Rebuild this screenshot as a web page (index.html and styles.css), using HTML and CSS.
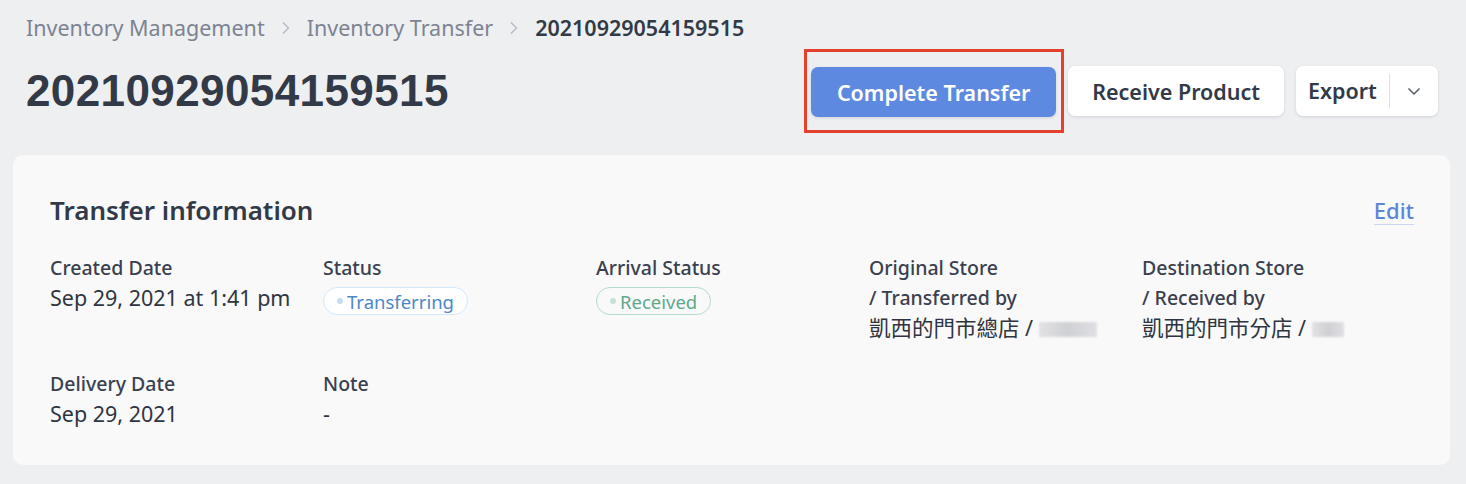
FILE: index.html
```html
<!DOCTYPE html>
<html lang="en">
<head>
    <meta charset="UTF-8">
    <meta name="viewport" content="width=device-width, initial-scale=1.0">
    <title>20210929054159515</title>
    <link rel="stylesheet" href="styles.css">
</head>
<body>
    <nav class="breadcrumb">
        <a href="#">Inventory Management</a>
        <span class="sep"><svg width="10" height="14" viewBox="0 0 10 14"><path d="M2 1.5 L7.5 7 L2 12.5" fill="none" stroke="#b3b8c2" stroke-width="1.3"/></svg></span>
        <a href="#">Inventory Transfer</a>
        <span class="sep"><svg width="10" height="14" viewBox="0 0 10 14"><path d="M2 1.5 L7.5 7 L2 12.5" fill="none" stroke="#b3b8c2" stroke-width="1.3"/></svg></span>
        <span class="current">20210929054159515</span>
    </nav>

    <header class="page-header">
        <h1>20210929054159515</h1>
        <div class="actions">
            <div class="highlight">
                <button class="btn btn-primary">Complete Transfer</button>
            </div>
            <button class="btn">Receive Product</button>
            <div class="btn btn-split">
                <span class="split-label">Export</span>
                <span class="split-toggle"><svg width="14" height="9" viewBox="0 0 14 9"><path d="M1.5 1.5 L7 7 L12.5 1.5" fill="none" stroke="#555c68" stroke-width="1.5"/></svg></span>
            </div>
        </div>
    </header>

    <section class="card">
        <div class="card-head">
            <h2>Transfer information</h2>
            <a href="#" class="edit">Edit</a>
        </div>

        <div class="info-grid">
            <div class="field">
                <div class="label">Created Date</div>
                <div class="value">Sep 29, 2021 at 1:41 pm</div>
            </div>
            <div class="field">
                <div class="label">Status</div>
                <span class="badge badge-blue"><i class="dot"></i>Transferring</span>
            </div>
            <div class="field">
                <div class="label">Arrival Status</div>
                <span class="badge badge-green"><i class="dot"></i>Received</span>
            </div>
            <div class="field">
                <div class="label">Original Store</div>
                <div class="label">/ Transferred by</div>
                <div class="value">凱西的門市總店 / <span class="masked wide"></span></div>
            </div>
            <div class="field">
                <div class="label">Destination Store</div>
                <div class="label">/ Received by</div>
                <div class="value">凱西的門市分店 / <span class="masked"></span></div>
            </div>

            <div class="field">
                <div class="label">Delivery Date</div>
                <div class="value">Sep 29, 2021</div>
            </div>
            <div class="field">
                <div class="label">Note</div>
                <div class="value">-</div>
            </div>
        </div>
    </section>
</body>
</html>
```

FILE: styles.css
```css
body {
    margin: 0;
    padding: 0 16px 20px 13px;
    background: #eeeff1;
    color: #333a47;
    font-family: "Noto Sans", "Noto Sans CJK TC", sans-serif;
}

.breadcrumb {
    display: flex;
    align-items: center;
    gap: 16px;
    padding: 13px 0 0 13px;
    font-size: 21.5px;
    line-height: 30px;
}

.breadcrumb a {
    color: #7c8392;
    text-decoration: none;
}

.breadcrumb .sep {
    display: flex;
    align-items: center;
}

.breadcrumb .current {
    color: #333a47;
    font-weight: 600;
}

.page-header {
    display: flex;
    align-items: center;
    justify-content: space-between;
    padding: 0 12px 0 13px;
    height: 100px;
    margin-top: -2px;
}

.page-header h1 {
    margin: 0;
    font-family: "Liberation Sans", Arial, sans-serif;
    font-size: 44px;
    font-weight: 700;
    color: #333a47;
    letter-spacing: 0.4px;
}

.actions {
    display: flex;
    align-items: center;
    gap: 12px;
}

.highlight {
    border: 3px solid #e5402b;
    padding: 15px 5px 13px 4px;
    margin-right: -8px;
}

.btn {
    height: 50px;
    padding: 0 24px;
    border: none;
    border-radius: 7px;
    background: #ffffff;
    color: #333a47;
    font-family: "Noto Sans", sans-serif;
    font-size: 21.5px;
    font-weight: 600;
    box-shadow: 0 1px 3px rgba(40, 50, 70, 0.15);
    cursor: pointer;
}

.btn-primary {
    display: block;
    width: 245px;
    padding: 0;
    background: #5d89e0;
    color: #ffffff;
}

.btn-split {
    display: flex;
    align-items: center;
    padding: 0;
    height: 50px;
    width: 142px;
    box-sizing: border-box;
}

.split-label {
    padding: 0 12px 0 12px;
    border-right: 1px solid #dfe1e5;
    line-height: 34px;
}

.split-toggle {
    display: flex;
    align-items: center;
    justify-content: center;
    flex: 1;
}

.card {
    background: #f9f9fa;
    border-radius: 10px;
    padding: 37px 36px 36px 37px;
    margin-top: 14px;
}

.card-head {
    display: flex;
    justify-content: space-between;
    align-items: center;
    margin-bottom: 25px;
}

.card-head h2 {
    margin: 0;
    font-size: 26px;
    font-weight: 600;
    color: #333a47;
}

.edit {
    color: #5b86dc;
    font-size: 22px;
    font-weight: 500;
    text-decoration: none;
    border-bottom: 1px solid #c9d7f3;
    line-height: 28px;
}

.info-grid {
    display: grid;
    grid-template-columns: repeat(5, 273px);
    row-gap: 26px;
}

.label {
    font-size: 19.5px;
    font-weight: 500;
    line-height: 30px;
    color: #3a404e;
}

.value {
    font-size: 21.5px;
    line-height: 30px;
    color: #2f3540;
}

.badge {
    display: inline-flex;
    align-items: center;
    gap: 4px;
    height: 26px;
    margin-top: 4px;
    padding: 0 13px 0 13px;
    border-radius: 14px;
    font-size: 18.5px;
    background: #ffffff;
}

.badge .dot {
    width: 6px;
    height: 6px;
    border-radius: 50%;
}

.badge-blue {
    border: 1.5px solid #d3e8fb;
    color: #4c88c6;
}

.badge-blue .dot {
    background: #c3dcf3;
}

.badge-green {
    border: 1.5px solid #b2dccb;
    color: #5ea88c;
    background: transparent;
}

.badge-green .dot {
    background: #c4e2d6;
}

.masked {
    display: inline-block;
    width: 32px;
    height: 15px;
    vertical-align: -1px;
    background: linear-gradient(to right, #e2e2e5, #cfd0d4, #e0e0e3);
    filter: blur(1px);
}

.masked.wide {
    width: 58px;
}
```
